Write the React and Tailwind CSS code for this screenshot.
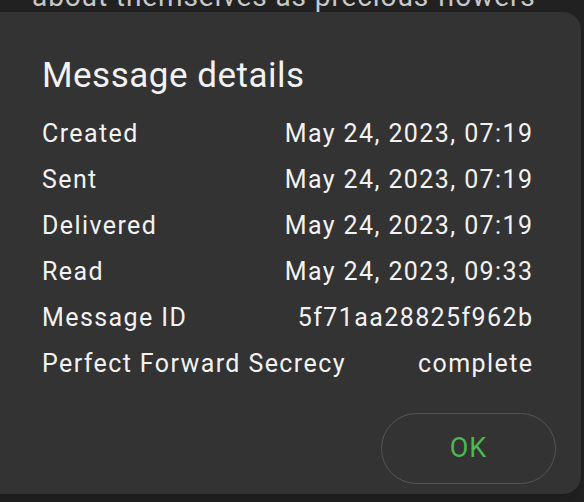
import React from 'react';

const rows = [
    ['Created', 'May 24, 2023, 07:19'],
    ['Sent', 'May 24, 2023, 07:19'],
    ['Delivered', 'May 24, 2023, 07:19'],
    ['Read', 'May 24, 2023, 09:33'],
    ['Message ID', '5f71aa28825f962b'],
    ['Perfect Forward Secrecy', 'complete'],
];

export default function App() {
    return (
        <div className="relative w-[584px] h-[502px] overflow-hidden bg-[#212121] font-['Roboto',sans-serif]">
            {/* conversation behind the dialog */}
            <div className="pl-[32px] -mt-[20px] text-[28px] leading-[34px] tracking-[0.9px] text-[#c8c8c8] whitespace-nowrap">
                about themselves as precious flowers
            </div>

            {/* dialog */}
            <div className="absolute left-[-16px] top-[12px] w-[597px] h-[482px] rounded-[18px] bg-[#333333] pl-[58px] pr-[49px] pt-[39px] shadow-lg">
                <h2 className="text-[35px] leading-[50px] tracking-[0.5px] text-[#f2f2f2]">Message details</h2>
                <div className="mt-[10px] flex flex-col">
                    {rows.map(([label, value]) => (
                        <div key={label} className="flex justify-between h-[46px] items-center text-[25px] tracking-[1.4px] text-[#f2f2f2]">
                            <span>{label}</span>
                            <span className="-mr-[1.4px]">{value}</span>
                        </div>
                    ))}
                </div>
                <div className="mt-[26px] flex justify-end">
                    <button className="mr-[-24px] w-[175px] h-[71px] rounded-full border-[1.5px] border-[#555555] text-[27px] tracking-[1px] text-[#4cb84f]">
                        OK
                    </button>
                </div>
            </div>
        </div>
    );
}
